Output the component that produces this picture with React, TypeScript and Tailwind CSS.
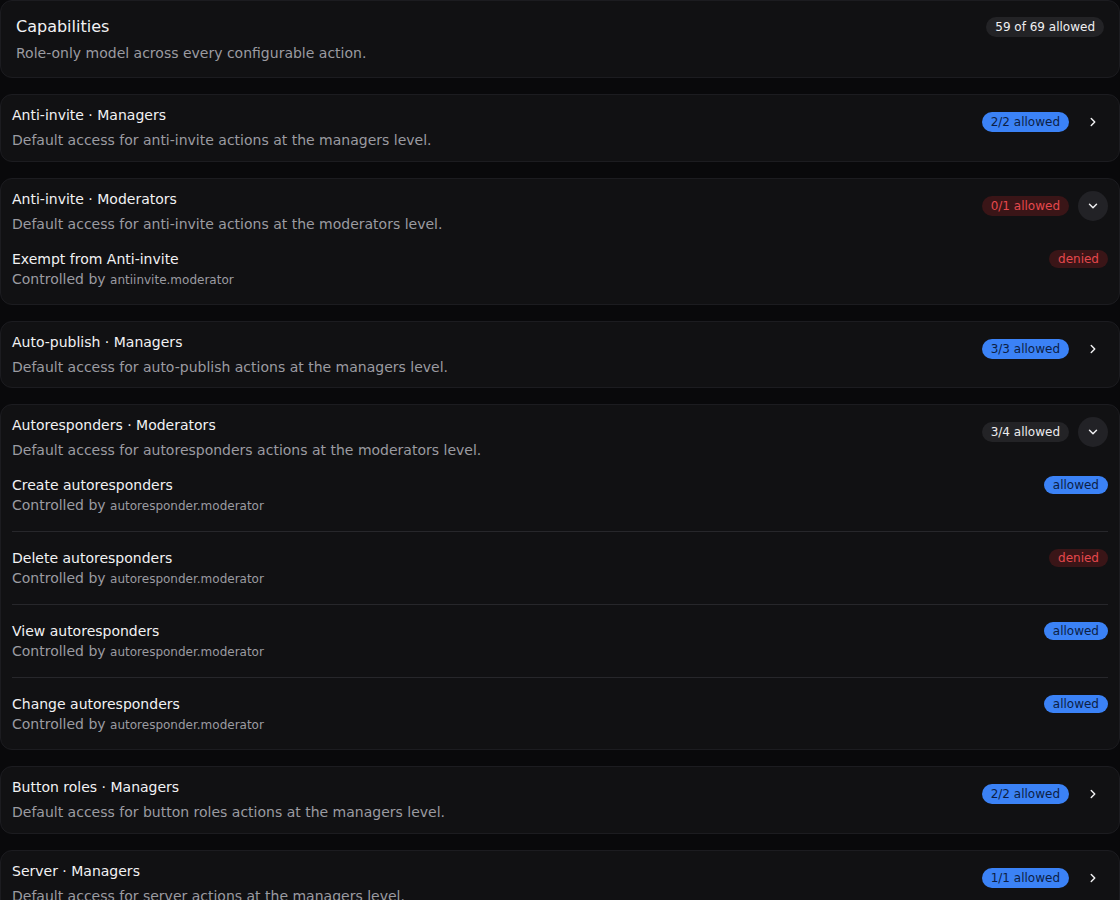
import React from 'react';

type Item = { name: string; key: string; allowed: boolean };
type Group = {
  title: string;
  desc: string;
  allowed: number;
  total: number;
  open?: boolean;
  items?: Item[];
};

const groups: Group[] = [
  { title: 'Anti-invite · Managers', desc: 'Default access for anti-invite actions at the managers level.', allowed: 2, total: 2 },
  {
    title: 'Anti-invite · Moderators',
    desc: 'Default access for anti-invite actions at the moderators level.',
    allowed: 0,
    total: 1,
    open: true,
    items: [{ name: 'Exempt from Anti-invite', key: 'antiinvite.moderator', allowed: false }],
  },
  { title: 'Auto-publish · Managers', desc: 'Default access for auto-publish actions at the managers level.', allowed: 3, total: 3 },
  {
    title: 'Autoresponders · Moderators',
    desc: 'Default access for autoresponders actions at the moderators level.',
    allowed: 3,
    total: 4,
    open: true,
    items: [
      { name: 'Create autoresponders', key: 'autoresponder.moderator', allowed: true },
      { name: 'Delete autoresponders', key: 'autoresponder.moderator', allowed: false },
      { name: 'View autoresponders', key: 'autoresponder.moderator', allowed: true },
      { name: 'Change autoresponders', key: 'autoresponder.moderator', allowed: true },
    ],
  },
  { title: 'Button roles · Managers', desc: 'Default access for button roles actions at the managers level.', allowed: 2, total: 2 },
  { title: 'Server · Managers', desc: 'Default access for server actions at the managers level.', allowed: 1, total: 1 },
];

const badgeClass = (allowed: number, total: number) => {
  if (allowed === total) return 'bg-[#3b82f6] text-[#0c1e45]';
  if (allowed === 0) return 'bg-[#3a1517] text-[#e5484d]';
  return 'bg-[#232326] text-[#ececee]';
};

const Chevron = ({ open }: { open?: boolean }) => (
  <svg width="14" height="14" viewBox="0 0 24 24" fill="none" stroke="currentColor" strokeWidth="2.5" strokeLinecap="round" strokeLinejoin="round">
    {open ? <path d="m6 9 6 6 6-6" /> : <path d="m9 18 6-6-6-6" />}
  </svg>
);

export default function App() {
  return (
    <div className="min-h-screen bg-[#09090b] text-[#ececee]" style={{ fontFamily: '"DejaVu Sans", sans-serif' }}>
      <div className="flex flex-col gap-4">
        <div className="rounded-xl border border-[#1c1c20] bg-[#111113] px-[15px] pt-[15px] pb-[14px] flex items-start justify-between">
          <div className="flex flex-col gap-1.5">
            <div className="text-base leading-[21px] text-[#f2f2f3]">Capabilities</div>
            <div className="text-sm leading-5 text-[#9b9ba1]">Role-only model across every configurable action.</div>
          </div>
          <span className="mt-px rounded-full bg-[#232326] px-[9px] h-5 flex items-center text-xs text-[#f0f0f2]">59 of 69 allowed</span>
        </div>

        {groups.map(g => (
          <div key={g.title} className="rounded-xl border border-[#1c1c20] bg-[#111113] px-[11px]">
            <div className={`flex items-start justify-between pt-[11px] ${g.open ? '' : 'pb-[10.5px]'}`}>
              <div className="flex flex-col gap-[5px]">
                <div className="text-sm leading-[19px] text-[#f2f2f3]">{g.title}</div>
                <div className="text-sm leading-5 text-[#9b9ba1]">{g.desc}</div>
              </div>
              <div className="mt-px flex items-center gap-[9px]">
                <span className={`rounded-full px-[9px] h-5 flex items-center text-xs ${badgeClass(g.allowed, g.total)}`}>
                  {g.allowed}/{g.total} allowed
                </span>
                <span className={`w-[30px] h-[30px] rounded-full flex items-center justify-center text-[#f0f0f2] ${g.open ? 'bg-[#222226]' : ''}`}>
                  <Chevron open={g.open} />
                </span>
              </div>
            </div>
            {g.open && (
              <div className="flex flex-col divide-y divide-[#27272b]">
                {g.items!.map(it => (
                  <div key={it.name} className="flex items-start justify-between py-4 first:pt-[15px] last:pb-[15px]">
                    <div className="flex flex-col">
                      <div className="text-sm leading-5 text-[#f2f2f3]">{it.name}</div>
                      <div className="text-sm leading-5 text-[#9b9ba1]">
                        Controlled by <span className="text-xs">{it.key}</span>
                      </div>
                    </div>
                    <span
                      className={`mt-px rounded-full px-[9px] h-[18px] flex items-center text-xs ${
                        it.allowed ? 'bg-[#3b82f6] text-[#0c1e45]' : 'bg-[#3a1517] text-[#e5484d]'
                      }`}
                    >
                      {it.allowed ? 'allowed' : 'denied'}
                    </span>
                  </div>
                ))}
              </div>
            )}
          </div>
        ))}
      </div>
    </div>
  );
}
